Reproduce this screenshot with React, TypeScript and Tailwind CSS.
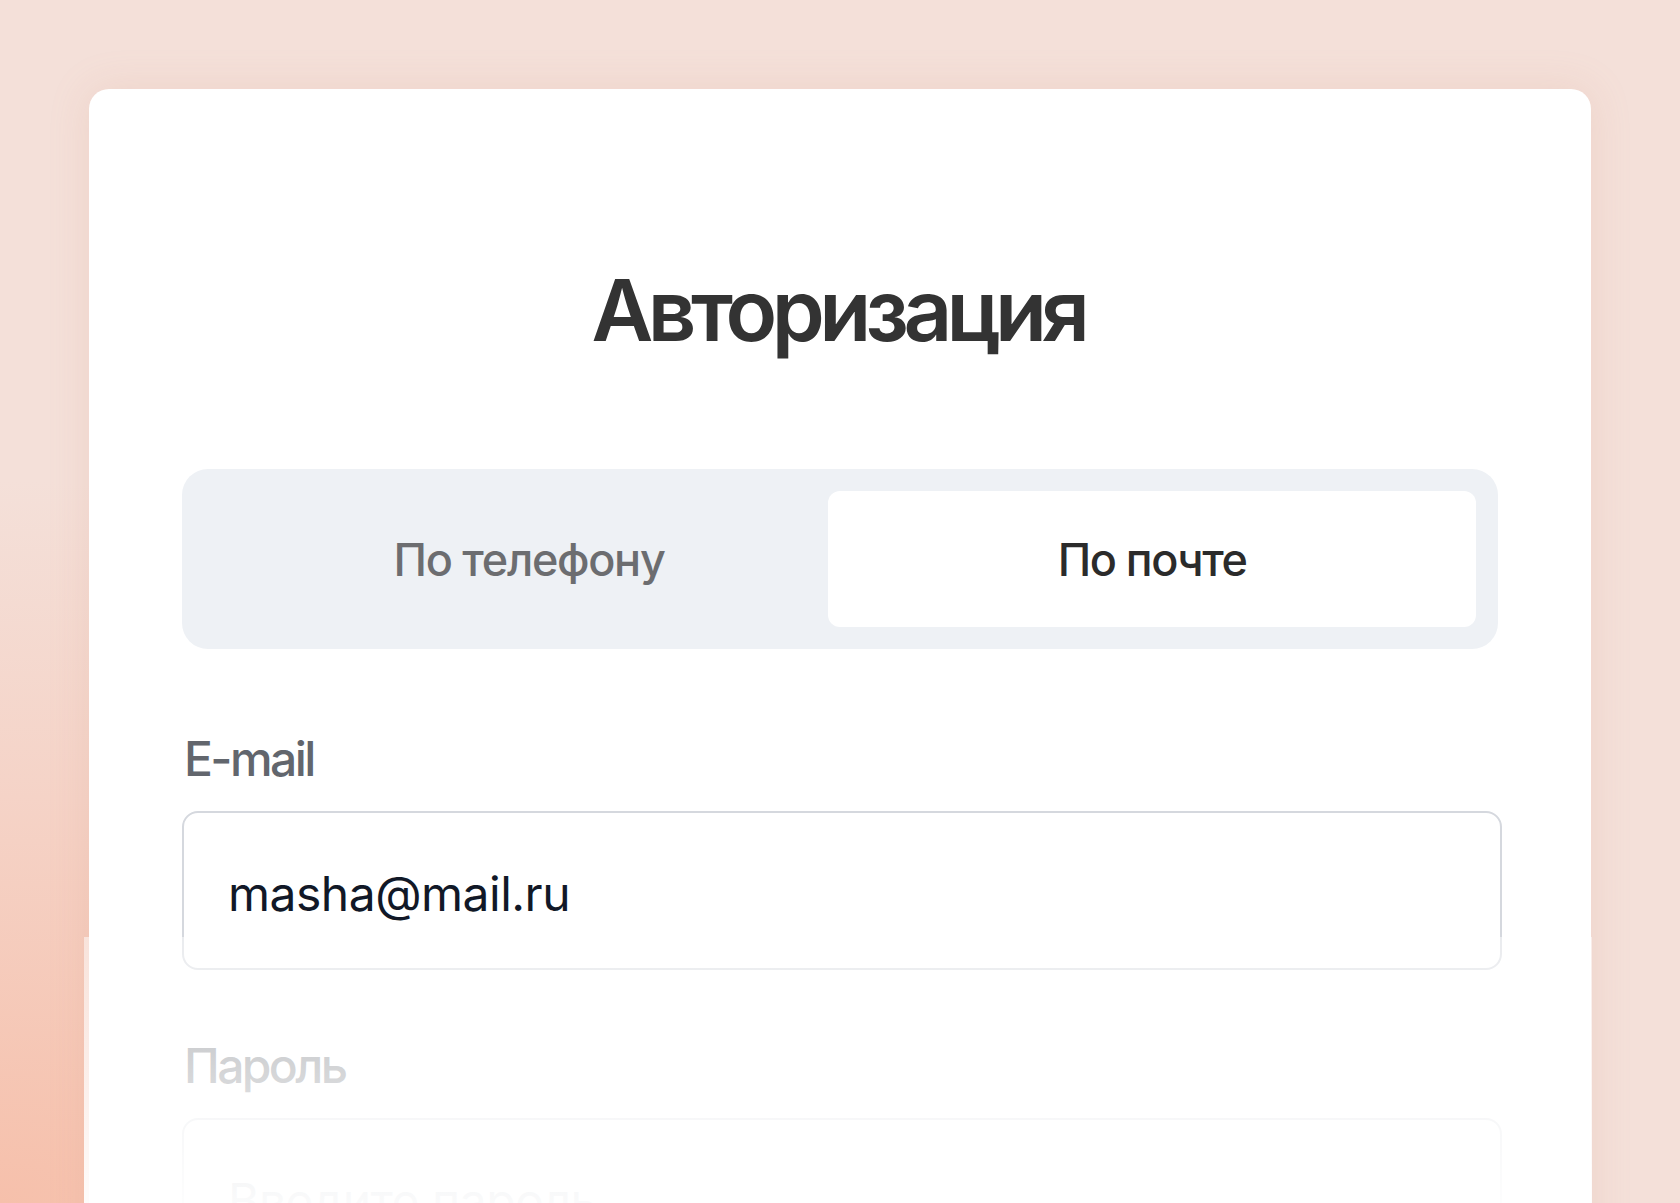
import React from "react";

function App() {
  return (
    <div className="relative min-h-[1203px] h-[1203px] overflow-hidden bg-[radial-gradient(ellipse_95%_75%_at_0%_100%,#f6c0ab_0%,#f5d3c7_45%,#f4e0d9_80%)] font-['Inter','Noto_Sans',sans-serif]">
      {/* Card */}
      <div className="mx-auto mt-[89px] w-[1502px] rounded-[20px] bg-white pl-[93px] pr-[89px] pt-[179px] pb-[120px] shadow-[0_0_40px_rgba(214,150,128,0.18)]">
        <h1 className="pr-[8px] text-center text-[85px] leading-none font-semibold tracking-[-5.6px] text-[#333333]">
          Авторизация
        </h1>

        {/* Tabs */}
        <div className="mt-[116px] grid h-[180px] w-[1316px] grid-cols-[1fr_648px] rounded-[26px] bg-[#eef1f5] p-[22px]">
          <button className="flex items-center justify-center pl-[26px] text-[45px] leading-none font-medium tracking-[-1.3px] text-[#6c6d70]">
            По телефону
          </button>
          <button className="flex items-center justify-center rounded-[12px] bg-white text-[45px] leading-none font-medium tracking-[-1.5px] text-[#2b2b2b]">
            По почте
          </button>
        </div>

        {/* E-mail */}
        <label className="mt-[86px] block pl-[2px] text-[48px] leading-none font-medium tracking-[-2.6px] text-[#62666d]">
          E-mail
        </label>
        <div className="mt-[28px] flex h-[159px] items-center rounded-[16px] border-2 border-[#d5d8de] pl-[44px] pt-[6px]">
          <span className="text-[48px] leading-none tracking-[-0.5px] text-[#111827]">
            masha@mail.ru
          </span>
        </div>

        {/* Password */}
        <label className="mt-[72px] block pl-[2px] text-[48px] leading-none font-medium tracking-[-2.6px] text-[#62666d]">
          Пароль
        </label>
        <div className="mt-[28px] flex h-[159px] items-center rounded-[16px] border-2 border-[#d5d8de] pl-[44px] pt-[6px]">
          <span className="text-[48px] leading-none tracking-[-0.5px] text-[#9ca3af]">
            Введите пароль
          </span>
        </div>
      </div>

      {/* Bottom fade over the form */}
      <div className="pointer-events-none absolute top-[937px] bottom-0 left-[84px] w-[1508px] bg-gradient-to-b from-white/50 to-white/95" />
    </div>
  );
}

export default App;
